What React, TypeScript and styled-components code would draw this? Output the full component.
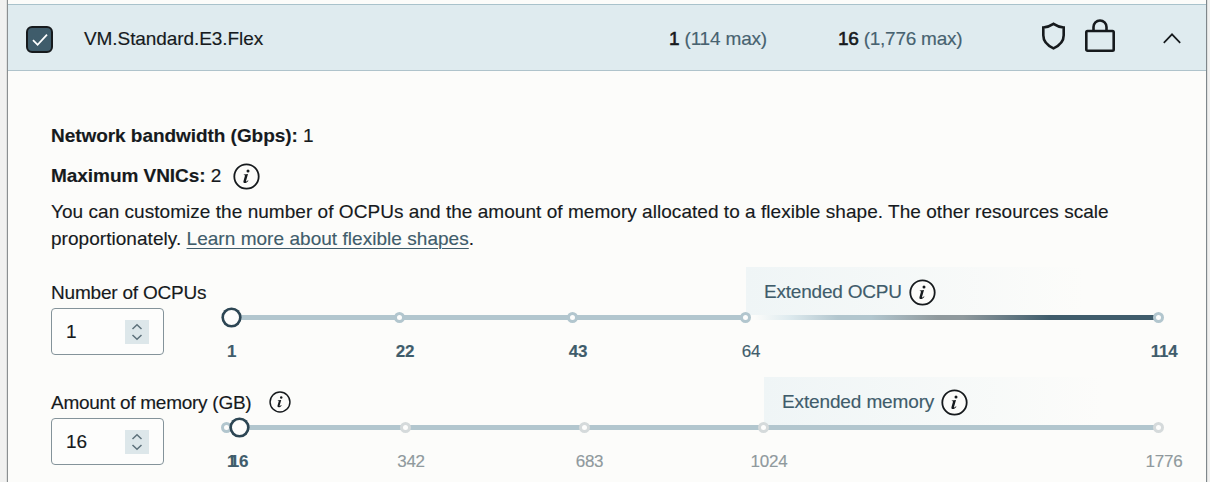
import React from "react";
import styled, { createGlobalStyle } from "styled-components";

const GlobalStyle = createGlobalStyle`
  body {
    margin: 0;
    background: #f1f1f0;
    color: #161a1d;
    font-family: "Liberation Sans", Arial, sans-serif;
    font-size: 19px;
    -webkit-text-stroke: 0.15px currentColor;
    overflow: hidden;
  }
  * { box-sizing: border-box; }
`;

const Panel = styled.main`
  width: 1200px;
  height: 482px;
  margin-left: 7px;
  padding-top: 4px;
  overflow: hidden;
  background: #fcfcfa;
  border-left: 1px solid #8b8f91;
  border-right: 1px solid #7f878b;
  box-shadow: 0 0 1px #8b8f91;
`;

const Header = styled.header`
  display: grid;
  grid-template-columns: 58px 585px 169px 203px 44px 78px auto;
  align-items: center;
  height: 67px;
  padding: 0 0 1px 18px;
  background: #dfebef;
  border-top: 1px solid #a9c2cb;
  border-bottom: 1px solid #afc3cb;
`;

const Check = styled.span`
  display: grid;
  place-items: center;
  width: 27px;
  height: 27px;
  margin-top: 5px;
  border: 2px solid #161a1d;
  border-radius: 6px;
  background: #3f5c6b;
`;

const Label = styled.span<{ $spacing?: number }>`
  white-space: nowrap;
  line-height: 22px;
  letter-spacing: ${(p) => p.$spacing ?? 0}px;
`;

const Cell = styled(Label)`
  padding-top: 3px;
`;

const Muted = styled.span`
  color: #47626f;
`;

const Strong = styled.span`
  -webkit-text-stroke: 0.6px currentColor;
`;

const Body = styled.section`
  padding: 53px 0 0 43px;
`;

const Fact = styled.div<{ $height: number; $top?: number }>`
  display: flex;
  align-items: center;
  height: ${(p) => p.$height}px;
  padding-top: ${(p) => p.$top ?? 0}px;
  white-space: pre;
  letter-spacing: -0.05px;
`;

const FactInfo = styled.span`
  display: flex;
  margin-left: 12px;
`;

const Description = styled.p`
  width: 1085px;
  margin: 0;
  height: 69px;
  line-height: 27px;
  letter-spacing: 0.04px;
`;

const Link = styled.a`
  color: #3f5c6b;
  text-decoration: underline;
  text-decoration-thickness: 1px;
  text-underline-offset: 3px;
`;

const Resource = styled.div`
  display: grid;
  grid-template-columns: 171px 941px;
  height: 110px;
`;

const Field = styled.div`
  padding-top: 12px;
`;

const FieldLabel = styled.div`
  display: flex;
  align-items: center;
  gap: 18px;
  width: 260px;
  height: 29px;
  padding-bottom: 1px;
`;

const FieldInfo = styled.span`
  display: flex;
  margin-bottom: 3px;
`;

const NumberBox = styled.div`
  display: flex;
  align-items: center;
  justify-content: space-between;
  width: 113px;
  height: 47px;
  padding: 0 14px 0 14px;
  background: #fdfdfc;
  border: 1px solid #84939a;
  border-radius: 4px;
`;

const Stepper = styled.span`
  display: grid;
  place-items: center;
  width: 24px;
  height: 24px;
  background: #dde7ea;
`;

const Extended = styled.div<{ $start: number }>`
  display: flex;
  align-items: center;
  gap: 7px;
  width: 338px;
  height: 48px;
  margin-left: ${(p) => p.$start}px;
  padding: 2px 0 0 18px;
  color: #3f5c6b;
  background: linear-gradient(90deg, #eff5f6, #fcfcfa);
`;

const Rail = styled.div`
  position: relative;
  display: flex;
  height: 5px;
  border-radius: 3px;
  background: #b2c6ce;
`;

const ExtendedRail = styled.div`
  width: 417px;
  height: 5px;
  margin-left: 524px;
  background: linear-gradient(90deg, #fcfcfa 2%, #dfebef 10%, #b2c6ce 22%, #b2c6ce 30%, #8f999d 46%, #8f999d 52%, #3f5c6b 73%);
`;

const Stop = styled.span<{ $at: number; $dim?: boolean }>`
  position: absolute;
  top: -3px;
  left: ${(p) => p.$at - 5.5}px;
  width: 11px;
  height: 11px;
  border: 3px solid ${(p) => (p.$dim ? "#d5dadb" : "#b2c6ce")};
  border-radius: 50%;
  background: #fdfdfc;
`;

const Thumb = styled.span<{ $at: number }>`
  position: absolute;
  top: -7px;
  left: ${(p) => p.$at - 9.5}px;
  width: 19px;
  height: 19px;
  border: 2px solid #2d4654;
  border-radius: 50%;
  background: #fdfdfc;
  box-shadow: 0 0 0 0.6px #2d4654;
`;

const Scale = styled.div`
  position: relative;
  height: 20px;
  margin-top: 22px;
  font-size: 17px;
  line-height: 20px;
`;

const ScaleLabel = styled.span<{ $at: number; $bold?: boolean; $dim?: boolean }>`
  position: absolute;
  left: ${(p) => p.$at}px;
  transform: translateX(-50%);
  letter-spacing: -0.25px;
  color: ${(p) => (p.$dim ? "#8f999d" : "#3f5c6b")};
  font-weight: ${(p) => (p.$bold ? 700 : 400)};
`;

type Mark = { text: string; at: number; bold?: boolean; dim?: boolean };
type Dot = { at: number; dim?: boolean };

const InfoMark = styled.svg`
  flex: none;
`;

function Info({ size = 27 }: { size?: number }) {
  return (
    <InfoMark width={size} height={size} viewBox="0 0 27 27">
      <circle cx="13.5" cy="13.5" r="12.2" fill="#fcfcfa" stroke="#161a1d" strokeWidth="1.8" />
      <circle cx="15" cy="8" r="1.5" fill="#161a1d" />
      <path
        d="M10.9 11.5l4.1-.5-2 7.1c-.2.8.4.7 1.9-.9l.6.5c-1.4 1.8-2.5 2.3-3.6 2.3-1.3 0-1.8-.8-1.4-2.1l1.4-5c.1-.6-.2-.8-1.2-.8z"
        fill="#161a1d"
      />
    </InfoMark>
  );
}

function ResourceRow(props: {
  label: string;
  spacing: number;
  info?: boolean;
  value: string;
  extended: string;
  extendedSpacing: number;
  start: number;
  gradient?: boolean;
  thumb: number;
  dots: Dot[];
  marks: Mark[];
}) {
  return (
    <Resource>
      <Field>
        <FieldLabel>
          <Label $spacing={props.spacing}>{props.label}</Label>
          {props.info && (
            <FieldInfo>
              <Info size={22} />
            </FieldInfo>
          )}
        </FieldLabel>
        <NumberBox>
          <Label>{props.value}</Label>
          <Stepper>
            <svg width="12" height="18" viewBox="0 0 12 18" fill="none" stroke="#5d717b" strokeWidth="1.5">
              <path d="M1.5 6 6 1.8 10.5 6M1.5 12 6 16.2 10.5 12" />
            </svg>
          </Stepper>
        </NumberBox>
      </Field>
      <div>
        <Extended $start={props.start}>
          <Label $spacing={props.extendedSpacing}>{props.extended}</Label>
          <Info />
        </Extended>
        <Rail>
          {props.gradient && <ExtendedRail />}
          {props.dots.map((d) => (
            <Stop key={d.at} $at={d.at} $dim={d.dim} />
          ))}
          <Thumb $at={props.thumb} />
        </Rail>
        <Scale>
          {props.marks.map((m) => (
            <ScaleLabel key={m.text} $at={m.at} $bold={m.bold} $dim={m.dim}>
              {m.text}
            </ScaleLabel>
          ))}
        </Scale>
      </div>
    </Resource>
  );
}

export default function App() {
  return (
    <>
      <GlobalStyle />
      <Panel>
        <Header>
          <Check>
            <svg width="18" height="16" viewBox="0 0 18 16" fill="none" stroke="#fff" strokeWidth="1.8">
              <path d="M2 8.2 6.6 12.8 16 2.6" />
            </svg>
          </Check>
          <Cell $spacing={-0.08}>VM.Standard.E3.Flex</Cell>
          <Cell $spacing={-0.18}>
            <Strong>1</Strong> <Muted>(114 max)</Muted>
          </Cell>
          <Cell $spacing={-0.25}>
            <Strong>16</Strong> <Muted>(1,776 max)</Muted>
          </Cell>
          <svg width="25" height="30" viewBox="0 0 25 30" fill="none" stroke="#161a1d" strokeWidth="2.6">
            <path d="M12.5 1.9C9.4 4 6 5.1 2.3 5.5v7.8c0 5.8 4.8 10.6 10.2 13.1 5.4-2.5 10.2-7.3 10.2-13.1V5.5C19 5.1 15.6 4 12.5 1.9Z" />
          </svg>
          <svg width="30" height="38" viewBox="0 -2 30 38" fill="none" stroke="#161a1d" strokeWidth="2.6">
            <rect x="1.3" y="11" width="27.4" height="19.8" rx="1.2" />
            <path d="M8.5 11V7a6.5 6.5 0 0 1 13 0v4" />
          </svg>
          <svg width="18" height="14" viewBox="0 0 18 14" fill="none" stroke="#161a1d" strokeWidth="1.7">
            <path d="M.8 12.8 9 4.3l8.2 8.5" />
          </svg>
        </Header>
        <Body>
          <Fact $height={24}>
            <b>Network bandwidth (Gbps):</b> 1
          </Fact>
          <Fact $height={50} $top={6}>
            <b>Maximum VNICs:</b> 2
            <FactInfo>
              <Info />
            </FactInfo>
          </Fact>
          <Description>
            You can customize the number of OCPUs and the amount of memory allocated to a flexible shape. The
            other resources scale proportionately. <Link>Learn more about flexible shapes</Link>.
          </Description>
          <ResourceRow
            label="Number of OCPUs"
            spacing={-0.2}
            value="1"
            extended="Extended OCPU"
            extendedSpacing={-0.2}
            start={524}
            gradient
            thumb={9.5}
            dots={[{ at: 177.5 }, { at: 350.5 }, { at: 523.5 }, { at: 936.5 }]}
            marks={[
              { text: "1", at: 9.5, bold: true },
              { text: "22", at: 183, bold: true },
              { text: "43", at: 356, bold: true },
              { text: "64", at: 529 },
              { text: "114", at: 942, bold: true },
            ]}
          />
          <ResourceRow
            label="Amount of memory (GB)"
            spacing={-0.26}
            info
            value="16"
            extended="Extended memory"
            extendedSpacing={-0.13}
            start={542}
            thumb={17.5}
            dots={[
              { at: 4.5 },
              { at: 183.5, dim: true },
              { at: 362, dim: true },
              { at: 541.5, dim: true },
              { at: 936.5, dim: true },
            ]}
            marks={[
              { text: "1", at: 9.5, bold: true },
              { text: "16", at: 17, bold: true },
              { text: "342", at: 189, dim: true },
              { text: "683", at: 367.5, dim: true },
              { text: "1024", at: 547, dim: true },
              { text: "1776", at: 942, dim: true },
            ]}
          />
        </Body>
      </Panel>
    </>
  );
}
